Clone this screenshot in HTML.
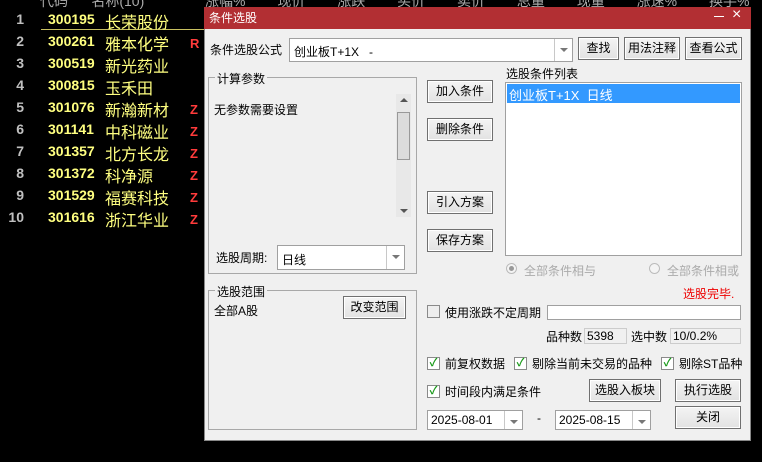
<!DOCTYPE html>
<html><head><meta charset="utf-8"><style>
*{margin:0;padding:0;box-sizing:border-box}
body{width:762px;height:462px;background:#000;position:relative;overflow:hidden;font-family:"Liberation Sans","Noto Sans CJK SC",sans-serif;font-size:12px;color:#000}
.a{position:absolute;white-space:nowrap}
.num{color:#c0c0c0;font-size:14px;font-weight:bold;width:24px;text-align:right}
.code{color:#ffff80;font-size:14px;font-weight:bold}
.name{color:#ffff80;font-size:16px}
.z{color:#ff3b3b;font-size:13px;font-weight:bold}
.btn{position:absolute;background:linear-gradient(#f4f4f4,#e2e2e2);border:1px solid #707070;box-shadow:inset 0 0 0 1px #fff;text-align:center;font-size:12px;line-height:20px}
.box{position:absolute;background:#fff;border:1px solid #a0a0a0}
.grp{position:absolute;border:1px solid #a8a8a8}
.gl{position:absolute;top:-8px;left:6px;background:#f0f0f0;padding:0 2px;font-size:12px}
.cb{position:absolute;width:13px;height:13px;border:1px solid #8a8a8a;background:#fff;color:#1a9a1a;font-size:11px;line-height:11px;text-align:center;font-weight:bold}
.dd{position:absolute;top:0;right:0;bottom:0;width:18px;border-left:1px solid #c8c8c8;background:#fff}
.dd:after{content:"";position:absolute;left:5px;top:9px;border:4px solid transparent;border-top:4px solid #777}
</style></head><body>
<div class="a" style="left:40px;top:-9px;color:#aaa;font-size:14px">代码 &nbsp;&nbsp;&nbsp;&nbsp;&nbsp;名称(10)</div>
<div class="a" style="left:205px;top:-9px;color:#aaa;font-size:14px;word-spacing:28px">涨幅% 现价 涨跌 买价 卖价 总量 现量 涨速% 换手%</div>
<div class="a" style="left:41px;top:29px;width:163px;height:1px;background:#c8c060"></div>
<div class="a num" style="left:0;top:11px">1</div><div class="a code" style="left:48px;top:11px">300195</div><div class="a name" style="left:105px;top:9px">长荣股份</div>
<div class="a num" style="left:0;top:33px">2</div><div class="a code" style="left:48px;top:33px">300261</div><div class="a name" style="left:105px;top:31px">雅本化学</div><div class="a z" style="left:190px;top:36px">R</div>
<div class="a num" style="left:0;top:55px">3</div><div class="a code" style="left:48px;top:55px">300519</div><div class="a name" style="left:105px;top:53px">新光药业</div>
<div class="a num" style="left:0;top:77px">4</div><div class="a code" style="left:48px;top:77px">300815</div><div class="a name" style="left:105px;top:75px">玉禾田</div>
<div class="a num" style="left:0;top:99px">5</div><div class="a code" style="left:48px;top:99px">301076</div><div class="a name" style="left:105px;top:97px">新瀚新材</div><div class="a z" style="left:190px;top:102px">Z</div>
<div class="a num" style="left:0;top:121px">6</div><div class="a code" style="left:48px;top:121px">301141</div><div class="a name" style="left:105px;top:119px">中科磁业</div><div class="a z" style="left:190px;top:124px">Z</div>
<div class="a num" style="left:0;top:143px">7</div><div class="a code" style="left:48px;top:143px">301357</div><div class="a name" style="left:105px;top:141px">北方长龙</div><div class="a z" style="left:190px;top:146px">Z</div>
<div class="a num" style="left:0;top:165px">8</div><div class="a code" style="left:48px;top:165px">301372</div><div class="a name" style="left:105px;top:163px">科净源</div><div class="a z" style="left:190px;top:168px">Z</div>
<div class="a num" style="left:0;top:187px">9</div><div class="a code" style="left:48px;top:187px">301529</div><div class="a name" style="left:105px;top:185px">福赛科技</div><div class="a z" style="left:190px;top:190px">Z</div>
<div class="a num" style="left:0;top:209px">10</div><div class="a code" style="left:48px;top:209px">301616</div><div class="a name" style="left:105px;top:207px">浙江华业</div><div class="a z" style="left:190px;top:212px">Z</div>

<div class="a" style="left:204px;top:7px;width:547px;height:434px;background:#f0f0f0;border:1px solid #888"></div>
<div class="a" style="left:204px;top:7px;width:547px;height:22px;background:#b22f33"></div>
<div class="a" style="left:209px;top:9px;color:#fff;font-size:12px">条件选股</div>
<div class="a" style="left:714px;top:16px;width:10px;height:1px;background:#fff"></div>
<div class="a" style="left:732px;top:6px;color:#fff;font-size:16px">×</div>

<div class="a" style="left:210px;top:41px">条件选股公式</div>
<div class="box" style="left:289px;top:38px;width:284px;height:24px"><span class="a" style="left:4px;top:4px">创业板T+1X &nbsp;&nbsp;-</span><div class="dd"></div></div>
<div class="btn" style="left:578px;top:37px;width:41px;height:23px">查找</div>
<div class="btn" style="left:624px;top:37px;width:56px;height:23px">用法注释</div>
<div class="btn" style="left:685px;top:37px;width:57px;height:23px">查看公式</div>

<div class="grp" style="left:208px;top:77px;width:209px;height:197px"><div class="gl">计算参数</div></div>
<div class="a" style="left:214px;top:101px">无参数需要设置</div>
<div class="a" style="left:396px;top:94px;width:15px;height:123px;background:#e8e8e8"></div>
<div class="a" style="left:397px;top:112px;width:13px;height:48px;background:#dcdcdc;border:1px solid #999"></div>
<div class="a" style="left:400px;top:98px;border:4px solid transparent;border-bottom:4px solid #555;border-top:0"></div>
<div class="a" style="left:400px;top:209px;border:4px solid transparent;border-top:4px solid #555;border-bottom:0"></div>
<div class="a" style="left:216px;top:249px">选股周期:</div>
<div class="box" style="left:277px;top:245px;width:128px;height:25px"><span class="a" style="left:4px;top:5px">日线</span><div class="dd"></div></div>

<div class="grp" style="left:208px;top:290px;width:209px;height:140px"><div class="gl">选股范围</div></div>
<div class="a" style="left:214px;top:302px">全部A股</div>
<div class="btn" style="left:343px;top:296px;width:63px;height:23px">改变范围</div>

<div class="btn" style="left:427px;top:80px;width:66px;height:23px">加入条件</div>
<div class="btn" style="left:427px;top:118px;width:66px;height:23px">删除条件</div>
<div class="btn" style="left:427px;top:191px;width:66px;height:23px">引入方案</div>
<div class="btn" style="left:427px;top:229px;width:66px;height:23px">保存方案</div>

<div class="a" style="left:506px;top:65px">选股条件列表</div>
<div class="box" style="left:505px;top:82px;width:237px;height:174px"></div>
<div class="a" style="left:507px;top:84px;width:233px;height:19px;background:#3399ff;color:#fff;font-size:13px;padding:1px 2px">创业板T+1X &nbsp;日线</div>

<div class="a" style="left:506px;top:263px;width:11px;height:11px;border-radius:50%;border:1px solid #bbb;background:#f4f4f4"><div style="width:5px;height:5px;margin:2px;border-radius:50%;background:#999"></div></div>
<div class="a" style="left:524px;top:262px;color:#aaa">全部条件相与</div>
<div class="a" style="left:649px;top:263px;width:11px;height:11px;border-radius:50%;border:1px solid #bbb;background:#f4f4f4"></div>
<div class="a" style="left:667px;top:262px;color:#aaa">全部条件相或</div>
<div class="a" style="left:683px;top:285px;color:#e00">选股完毕.</div>

<div class="cb" style="left:427px;top:305px;background:#eee"></div>
<div class="a" style="left:445px;top:304px">使用涨跌不定周期</div>
<div class="box" style="left:547px;top:305px;width:194px;height:15px"></div>
<div class="a" style="left:546px;top:328px">品种数</div>
<div class="a" style="left:584px;top:328px;width:43px;height:16px;border:1px solid #ccc;background:#f0f0f0;padding-left:2px">5398</div>
<div class="a" style="left:631px;top:328px">选中数</div>
<div class="a" style="left:670px;top:328px;width:71px;height:16px;border:1px solid #ccc;background:#f0f0f0;padding-left:2px">10/0.2%</div>

<div class="cb" style="left:427px;top:357px">✓</div><div class="a" style="left:445px;top:355px">前复权数据</div>
<div class="cb" style="left:514px;top:357px">✓</div><div class="a" style="left:532px;top:355px">剔除当前未交易的品种</div>
<div class="cb" style="left:661px;top:357px">✓</div><div class="a" style="left:679px;top:355px">剔除ST品种</div>
<div class="cb" style="left:427px;top:385px">✓</div><div class="a" style="left:445px;top:383px">时间段内满足条件</div>
<div class="btn" style="left:589px;top:379px;width:72px;height:23px">选股入板块</div>
<div class="btn" style="left:675px;top:379px;width:66px;height:23px">执行选股</div>
<div class="btn" style="left:675px;top:406px;width:66px;height:23px">关闭</div>
<div class="box" style="left:427px;top:410px;width:96px;height:20px"><span class="a" style="left:3px;top:2px">2025-08-01</span><div class="dd"></div></div>
<div class="a" style="left:537px;top:411px">-</div>
<div class="box" style="left:555px;top:410px;width:96px;height:20px"><span class="a" style="left:3px;top:2px">2025-08-15</span><div class="dd"></div></div>
</body></html>
